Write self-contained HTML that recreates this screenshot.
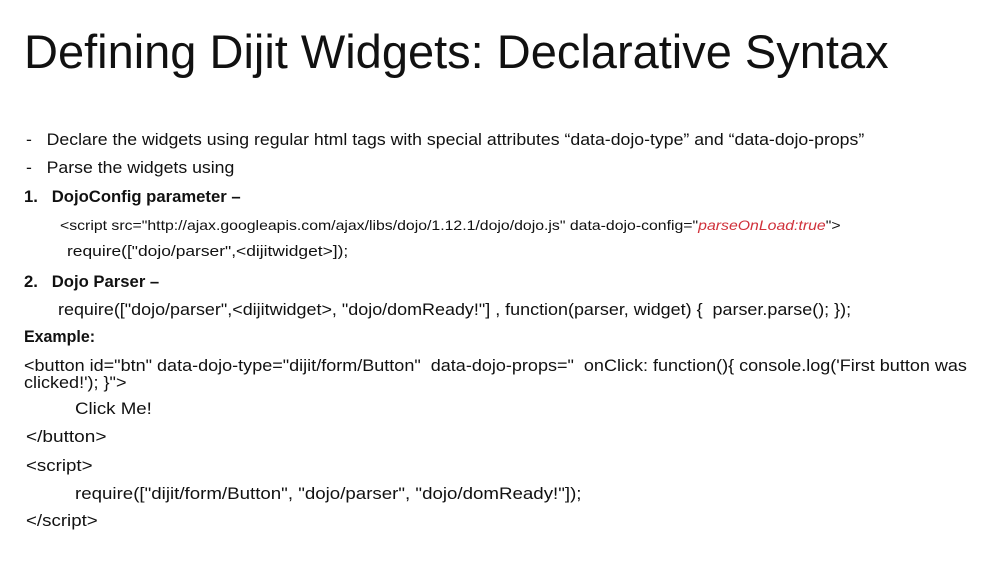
<!DOCTYPE html>
<html><head><meta charset="utf-8"><style>
body{margin:0;background:#fff;}
#s{position:relative;width:995px;height:565px;overflow:hidden;background:#fff;font-family:"Liberation Sans",sans-serif;color:#111;}
.l{position:absolute;white-space:nowrap;line-height:1;transform-origin:0 50%;transform:scaleX(1.05);}
b{font-weight:bold}
.r{color:#d0303a;font-style:italic}
</style></head><body><div id="s">
<div class="l" style="left:24px;top:28px;font-size:47px;transform:scaleX(1.0)">Defining Dijit Widgets: Declarative Syntax</div>
<div class="l" style="left:26px;top:131px;font-size:17px;transform:scaleX(1.04)">-&nbsp;&nbsp;&nbsp;Declare the widgets using regular html tags with special attributes “data-dojo-type” and “data-dojo-props”</div>
<div class="l" style="left:26px;top:159px;font-size:17px;transform:scaleX(1.04)">-&nbsp;&nbsp;&nbsp;Parse the widgets using</div>
<div class="l" style="left:24px;top:188px;font-size:17px;transform:scaleX(.98)"><b>1.&nbsp;&nbsp;&nbsp;DojoConfig parameter –</b></div>
<div class="l" style="left:60px;top:218px;font-size:14px;transform:scaleX(1.13)">&lt;script src="http://ajax.googleapis.com/ajax/libs/dojo/1.12.1/dojo/dojo.js" data-dojo-config="<span class="r">parseOnLoad:true</span>"&gt;</div>
<div class="l" style="left:67px;top:244px;font-size:15px;transform:scaleX(1.16)">require(["dojo/parser",&lt;dijitwidget&gt;]);</div>
<div class="l" style="left:24px;top:273px;font-size:17px;transform:scaleX(.98)"><b>2.&nbsp;&nbsp;&nbsp;Dojo Parser –</b></div>
<div class="l" style="left:58px;top:301px;font-size:17px;transform:scaleX(1.055)">require(["dojo/parser",&lt;dijitwidget&gt;, "dojo/domReady!"] , function(parser, widget) {&nbsp; parser.parse(); });</div>
<div class="l" style="left:24px;top:328px;font-size:17px;transform:scaleX(.94)"><b>Example:</b></div>
<div class="l" style="left:24px;top:357px;font-size:17px;transform:scaleX(1.06)">&lt;button id="btn" data-dojo-type="dijit/form/Button"&nbsp; data-dojo-props="&nbsp; onClick: function(){ console.log('First button was</div>
<div class="l" style="left:24px;top:374px;font-size:17px;transform:scaleX(1.06)">clicked!'); }"&gt;</div>
<div class="l" style="left:75px;top:400px;font-size:17px;transform:scaleX(1.1)">Click Me!</div>
<div class="l" style="left:26px;top:428px;font-size:17px;transform:scaleX(1.12)">&lt;/button&gt;</div>
<div class="l" style="left:26px;top:457px;font-size:17px;transform:scaleX(1.1)">&lt;script&gt;</div>
<div class="l" style="left:75px;top:485px;font-size:17px;transform:scaleX(1.1)">require(["dijit/form/Button", "dojo/parser", "dojo/domReady!"]);</div>
<div class="l" style="left:26px;top:512px;font-size:17px;transform:scaleX(1.1)">&lt;/script&gt;</div>
</div></body></html>
